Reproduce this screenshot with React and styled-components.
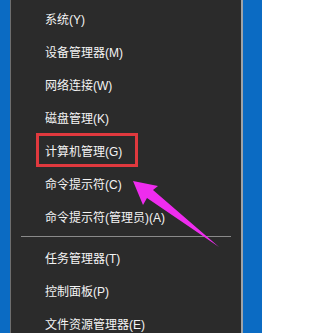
import React from "react";
import styled, { createGlobalStyle } from "styled-components";

const Global = createGlobalStyle`
  html, body { margin: 0; padding: 0; background: #ffffff; }
  #root { width: 270px; height: 333px; overflow: hidden; }
`;

const Screen = styled.div`
  position: relative;
  display: flex;
  width: 270px;
  height: 333px;
  background: #ffffff;
  overflow: hidden;
`;

const Desktop = styled.div`
  display: flex;
  width: 262px;
  height: 100%;
  box-sizing: border-box;
  padding-left: 10px;
  background: #0b6bc3;
`;

const Menu = styled.div`
  position: relative;
  width: 233px;
  height: 100%;
  box-sizing: border-box;
  padding-top: 2px;
  background: #2b2b2b;
  border-left: 1px solid #6e6e6e;
  border-right: 2px solid #9ea3a8;
  font-family: "Liberation Sans", "Noto Sans CJK SC", sans-serif;
  font-size: 12px;
  color: #f4f4f4;
`;

const Item = styled.div`
  display: flex;
  align-items: center;
  height: 33px;
  padding-left: 34px;
  white-space: nowrap;
`;

const Separator = styled.div`
  height: 8px;
  box-sizing: border-box;
  padding: 3px 10px 0 10px;
  &::after {
    content: "";
    display: block;
    height: 1px;
    background: #8a8a8a;
  }
`;

const Annotation = styled.div`
  position: absolute;
  left: 25px;
  top: 133px;
  width: 102px;
  height: 34px;
  box-sizing: border-box;
  border: 3px solid #e0393e;
  pointer-events: none;
`;

const ArrowLayer = styled.svg`
  position: absolute;
  left: 0;
  top: 0;
  width: 270px;
  height: 333px;
  pointer-events: none;
`;

const top = ["系统(Y)", "设备管理器(M)", "网络连接(W)", "磁盘管理(K)", "计算机管理(G)", "命令提示符(C)", "命令提示符(管理员)(A)"];
const bottom = ["任务管理器(T)", "控制面板(P)", "文件资源管理器(E)"];

export default function App() {
  return (
    <>
      <Global />
      <Screen>
        <Desktop>
          <Menu>
            {top.map((t) => (
              <Item key={t}>{t}</Item>
            ))}
            <Separator />
            {bottom.map((t) => (
              <Item key={t}>{t}</Item>
            ))}
            <Annotation />
          </Menu>
        </Desktop>
        <ArrowLayer viewBox="0 0 270 333">
          <polygon
            points="133,181 158,186 153,190 219,247 147,198 143,205"
            fill="#ee2cee"
          />
        </ArrowLayer>
      </Screen>
    </>
  );
}
